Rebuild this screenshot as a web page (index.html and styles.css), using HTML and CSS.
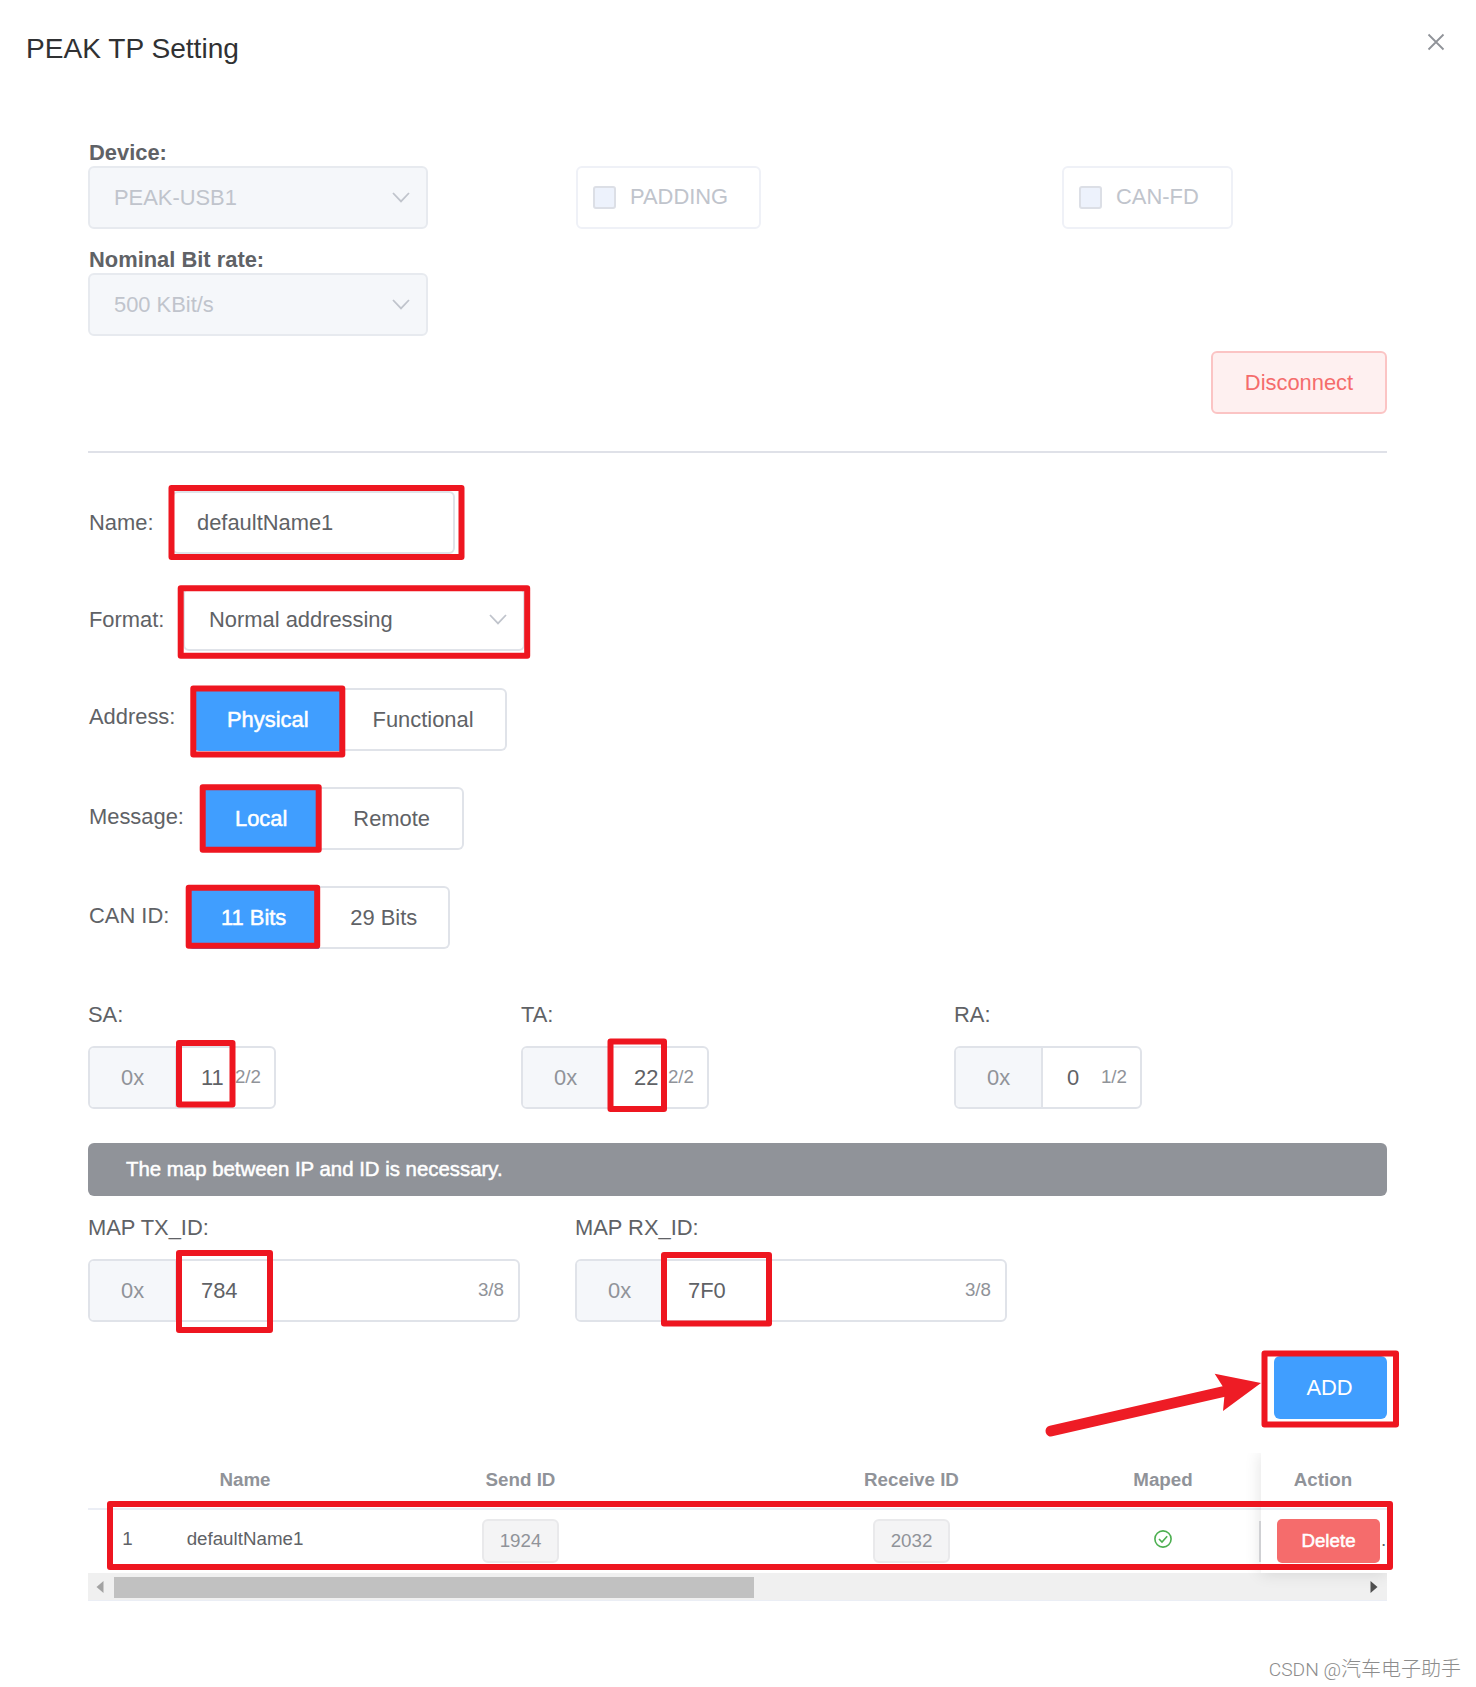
FILE: index.html
```
<!DOCTYPE html>
<html lang="en">
<head>
    <meta charset="UTF-8">
    <meta name="viewport" content="width=device-width, initial-scale=1.0">
    <title>PEAK TP Setting</title>
    <link rel="stylesheet" href="styles.css">
</head>
<body>
    <div class="dialog">
        <div class="dialog-header">
            <h5 class="dialog-title">PEAK TP Setting</h5>
            <button class="btn-close" aria-label="Close">
                <svg width="18" height="18" viewBox="0 0 18 18"><path d="M1.5 1.5L16.5 16.5M16.5 1.5L1.5 16.5" stroke="#909399" stroke-width="1.8" fill="none"/></svg>
            </button>
        </div>

        <div class="dialog-body">
            <!-- Device -->
            <div class="device-row">
                <div class="device-col">
                    <label class="label-bold">Device:</label>
                    <div class="select disabled">
                        <span>PEAK-USB1</span>
                        <svg class="chevron" width="18" height="11" viewBox="0 0 18 11"><path d="M1 1L9 9.4L17 1" stroke="#c0c4cc" stroke-width="1.8" fill="none"/></svg>
                    </div>
                    <label class="label-bold label-second">Nominal Bit rate:</label>
                    <div class="select disabled">
                        <span>500 KBit/s</span>
                        <svg class="chevron" width="18" height="11" viewBox="0 0 18 11"><path d="M1 1L9 9.4L17 1" stroke="#c0c4cc" stroke-width="1.8" fill="none"/></svg>
                    </div>
                </div>
                <div class="device-col">
                    <div class="checkbox-box check-padding"><span class="checkbox"></span><span class="checkbox-text">PADDING</span></div>
                </div>
                <div class="device-col">
                    <div class="checkbox-box check-canfd"><span class="checkbox"></span><span class="checkbox-text">CAN-FD</span></div>
                </div>
            </div>

            <div class="actions actions-connect">
                <button class="btn btn-disconnect">Disconnect</button>
            </div>

            <div class="divider"></div>

            <!-- Address settings -->
            <div class="form-row row-name">
                <label class="form-label">Name:</label>
                <input type="text" class="form-control" value="defaultName1">
            </div>
            <div class="form-row row-format">
                <label class="form-label">Format:</label>
                <div class="select">
                    <span>Normal addressing</span>
                    <svg class="chevron" width="18" height="11" viewBox="0 0 18 11"><path d="M1 1L9 9.4L17 1" stroke="#c0c4cc" stroke-width="1.8" fill="none"/></svg>
                </div>
            </div>
            <div class="form-row row-address">
                <label class="form-label">Address:</label>
                <div class="radio-group">
                    <button class="radio active">Physical</button>
                    <button class="radio">Functional</button>
                </div>
            </div>
            <div class="form-row row-message">
                <label class="form-label">Message:</label>
                <div class="radio-group">
                    <button class="radio active">Local</button>
                    <button class="radio">Remote</button>
                </div>
            </div>
            <div class="form-row row-canid">
                <label class="form-label">CAN ID:</label>
                <div class="radio-group">
                    <button class="radio active">11 Bits</button>
                    <button class="radio">29 Bits</button>
                </div>
            </div>

            <div class="address-grid">
                <div>
                    <label class="label-top">SA:</label>
                    <div class="input-group short">
                        <span class="prepend">0x</span>
                        <span class="value">11</span>
                        <span class="count">2/2</span>
                    </div>
                </div>
                <div>
                    <label class="label-top">TA:</label>
                    <div class="input-group short">
                        <span class="prepend">0x</span>
                        <span class="value">22</span>
                        <span class="count">2/2</span>
                    </div>
                </div>
                <div>
                    <label class="label-top">RA:</label>
                    <div class="input-group short">
                        <span class="prepend">0x</span>
                        <span class="value">0</span>
                        <span class="count">1/2</span>
                    </div>
                </div>
            </div>

            <div class="alert">The map between IP and ID is necessary.</div>

            <div class="map-row">
                <div class="map-col">
                    <label class="label-top">MAP TX_ID:</label>
                    <div class="input-group">
                        <span class="prepend">0x</span>
                        <span class="value">784</span>
                        <span class="count">3/8</span>
                    </div>
                </div>
                <div class="map-col">
                    <label class="label-top">MAP RX_ID:</label>
                    <div class="input-group">
                        <span class="prepend">0x</span>
                        <span class="value">7F0</span>
                        <span class="count">3/8</span>
                    </div>
                </div>
            </div>

            <div class="actions actions-add">
                <button class="btn btn-add">ADD</button>
            </div>

            <!-- Table -->
            <div class="table">
                <div class="table-main">
                    <div class="table-head">
                        <span></span>
                        <span>Name</span>
                        <span>Send ID</span>
                        <span>Receive ID</span>
                        <span>Maped</span>
                        <span></span>
                    </div>
                    <div class="table-row">
                        <span>1</span>
                        <span>defaultName1</span>
                        <span><span class="tag">1924</span></span>
                        <span><span class="tag">2032</span></span>
                        <span>
                            <svg width="18" height="18" viewBox="0 0 18 18"><circle cx="9" cy="9" r="8.1" stroke="#4caf50" stroke-width="1.6" fill="none"/><path d="M5 9L8 12L13.2 6.3" stroke="#4caf50" stroke-width="1.6" fill="none"/></svg>
                        </span>
                        <span class="cell-cut"></span>
                    </div>
                </div>
                <div class="table-fixed">
                    <div class="fixed-head">Action</div>
                    <div class="fixed-row"><button class="btn-delete">Delete</button><span class="dots">.</span></div>
                </div>
            </div>
            <div class="scrollbar">
                <svg width="8" height="12" viewBox="0 0 8 12"><path d="M7.5 0V12L0.5 6Z" fill="#a3a3a3"/></svg>
                <div class="scroll-thumb"></div>
                <svg class="scroll-right" width="8" height="12" viewBox="0 0 8 12"><path d="M0.5 0V12L7.5 6Z" fill="#505050"/></svg>
            </div>
        </div>

        <div class="watermark"><span class="watermark-site">CSDN @</span>汽车电子助手</div>

        <!-- Red marks over the form -->
        <svg class="marks" width="1476" height="1687" viewBox="0 0 1476 1687">
            <g fill="none" stroke="#ee1620" stroke-width="6" stroke-linejoin="round">
                <rect x="171.5" y="488" width="290" height="69"/>
                <rect x="180.7" y="588.3" width="346.5" height="67.5"/>
                <rect x="193.3" y="688.5" width="149" height="66"/>
                <rect x="202.7" y="787.3" width="116" height="62.5"/>
                <rect x="188.7" y="887.7" width="128.5" height="58"/>
                <rect x="179" y="1043" width="53.5" height="61.5"/>
                <rect x="610.5" y="1041.5" width="53.5" height="67.5"/>
                <rect x="179" y="1253" width="91" height="77"/>
                <rect x="664" y="1255" width="105" height="68.5"/>
                <rect x="1264.5" y="1353.5" width="131.5" height="71"/>
                <rect x="110" y="1504" width="1280" height="63"/>
            </g>
            <path d="M1051 1431L1226 1391" stroke="#ee1c25" stroke-width="11" stroke-linecap="round"/>
            <path d="M1261 1383L1214.7 1373.7L1225 1390L1223 1411Z" fill="#ee1c25"/>
        </svg>
    </div>
</body>
</html>
```
FILE: styles.css
```
* {
    box-sizing: border-box;
}

body {
    margin: 0;
    background-color: #fff;
    color: #606266;
    font-family: "Liberation Sans", Arial, "Noto Sans CJK SC", sans-serif;
    font-size: 21.9px;
}

button,
input {
    font-family: inherit;
    font-size: inherit;
}

.dialog {
    position: relative;
    width: 1476px;
    height: 1687px;
    overflow: hidden;
}

.dialog-header {
    display: flex;
    justify-content: space-between;
    align-items: flex-start;
    height: 142px;
    padding: 33px 31px 0 26px;
}

.dialog-title {
    margin: 0;
    color: #303133;
    font-size: 28.1px;
    font-weight: normal;
    line-height: 32px;
}

.btn-close {
    display: flex;
    padding: 0;
    border: none;
    background: none;
}

.dialog-body {
    padding: 0 89px 0 88px;
}

/* Device */
.device-row {
    display: flex;
    height: 194px;
}

.device-col {
    width: 487px;
}

.device-col:last-child {
    width: 325px;
}

.label-bold {
    display: block;
    margin-bottom: 2px;
    padding-left: 1px;
    font-weight: bold;
    line-height: 22px;
}

.label-second {
    margin-top: 20px;
}

.select {
    display: flex;
    justify-content: space-between;
    align-items: center;
    width: 340px;
    height: 63px;
    padding: 0 16px 0 24px;
    border: 2px solid #e0e3e9;
    border-radius: 6px;
}

.select.disabled {
    background-color: #f5f7fa;
    border-color: #e7eaef;
    color: #c0c4cc;
}

.chevron {
    margin-top: -1px;
}

.checkbox-box {
    display: flex;
    align-items: center;
    height: 63px;
    margin-top: 24px;
    padding-left: 15px;
    border: 2px solid #eff1f7;
    border-radius: 6px;
    color: #c0c4cc;
}

.check-padding {
    width: 185px;
    margin-left: 1px;
}

.check-canfd {
    width: 171px;
}

.checkbox {
    width: 23px;
    height: 23px;
    margin-right: 14px;
    background-color: #edf2fc;
    border: 2px solid #dcdfe6;
    border-radius: 3px;
}

.checkbox-text {
    padding-bottom: 2px;
}

.actions {
    display: flex;
    justify-content: flex-end;
}

.actions-connect {
    margin-top: 15px;
}

.btn {
    height: 63px;
    padding: 0;
    border-radius: 6px;
}

.btn-disconnect {
    width: 176px;
    background-color: #fef0f0;
    border: 2px solid #fbc4c4;
    color: #f56c6c;
}

.divider {
    height: 2px;
    margin-top: 37px;
    background-color: #dfe1e8;
}

/* Address settings */
.form-row {
    display: flex;
    align-items: center;
    height: 63px;
}

.form-label {
    padding-left: 1px;
}

.row-name {
    margin-top: 38px;
}

.row-name .form-label {
    width: 84px;
}

.form-control {
    width: 283px;
    height: 63px;
    padding: 0 23px;
    border: 2px solid #e0e3e9;
    border-radius: 6px;
    color: #606266;
}

.row-format {
    margin-top: 34px;
}

.row-format .form-label {
    width: 95px;
}

.row-format .select {
    width: 342px;
}

.row-address {
    margin-top: 37px;
}

.row-address .form-label {
    width: 105px;
    padding-bottom: 6px;
}

.row-message {
    margin-top: 36px;
}

.row-message .form-label {
    width: 113px;
    padding-bottom: 3px;
}

.row-canid {
    margin-top: 36px;
}

.row-canid .form-label {
    width: 99px;
    padding-bottom: 3px;
}

.radio-group {
    display: flex;
}

.radio {
    height: 63px;
    padding: 0 31px;
    background-color: #fff;
    border: 2px solid #e0e3e9;
    border-left: none;
    border-radius: 0 6px 6px 0;
    color: #606266;
}

.radio.active {
    padding: 0 31px 0 32px;
    background-color: #409eff;
    border: 2px solid #409eff;
    border-radius: 6px 0 0 6px;
    color: #fff;
    -webkit-text-stroke: 0.5px #fff;
}

.row-message .radio {
    padding: 0 32px;
}

.address-grid {
    display: grid;
    grid-template-columns: repeat(3, 1fr);
    margin-top: 55px;
}

.label-top {
    display: block;
    margin-bottom: 20px;
    line-height: 22px;
}

.input-group {
    display: flex;
    align-items: center;
    width: 432px;
    height: 63px;
    border: 2px solid #e0e3e9;
    border-radius: 6px;
    overflow: hidden;
}

.input-group.short {
    width: 188px;
}

.prepend {
    width: 87px;
    height: 59px;
    padding-left: 31px;
    background-color: #f5f7fa;
    border-right: 2px solid #e0e3e9;
    color: #909399;
    line-height: 59px;
}

.value {
    flex: 1;
    padding-left: 24px;
}

.count {
    padding: 0 14px 1px 0;
    color: #909399;
    font-size: 18.75px;
}

.short .count {
    padding-right: 13px;
}

.short .value {
    width: 60px;
}

.alert {
    display: flex;
    align-items: center;
    height: 53px;
    margin-top: 34px;
    padding: 0 38px 1px;
    background-color: #909399;
    border-radius: 6px;
    color: #fff;
    font-size: 20.4px;
    -webkit-text-stroke: 0.5px #fff;
}

.map-row {
    display: flex;
    margin-top: 21px;
}

.map-col {
    width: 487px;
}

.actions-add {
    margin-top: 34px;
}

.btn-add {
    width: 113px;
    padding-right: 2px;
    background-color: #409eff;
    border: none;
    color: #fff;
}

/* Table */
.table {
    display: flex;
    height: 120px;
    margin-top: 34px;
    font-size: 18.75px;
}

.table-main {
    overflow: hidden;
}

.table-head,
.table-row {
    display: grid;
    grid-template-columns: 79px 156px 395px 387px 116px 40px;
    align-items: center;
    text-align: center;
}

.table-head {
    height: 57px;
    padding-bottom: 2px;
    border-bottom: 2px solid #ebeef5;
    color: #909399;
    font-weight: bold;
}

.table-row {
    height: 58px;
}

.tag {
    display: inline-block;
    width: 77px;
    height: 44px;
    margin-top: 4px;
    background-color: #f4f4f5;
    border: 2px solid #e9e9eb;
    border-radius: 6px;
    color: #909399;
    line-height: 40px;
}

.table-row svg {
    display: block;
    margin: 0 auto;
}

.cell-cut {
    justify-self: end;
    width: 2px;
    height: 41px;
    margin-top: 4px;
    background-color: #dcdde0;
}

/* Fixed column casts its shadow on the table and on the scrollbar */
.table-fixed {
    position: relative;
    z-index: 1;
    width: 126px;
    background-color: #fff;
    box-shadow: 0 0 16px rgba(0, 0, 0, 0.12);
    clip-path: inset(0 0 -16px -16px);
}

.fixed-head {
    height: 57px;
    padding: 0 2px 2px 0;
    border-bottom: 2px solid #ebeef5;
    color: #909399;
    font-weight: bold;
    line-height: 54px;
    text-align: center;
}

.fixed-row {
    display: flex;
    align-items: flex-end;
    padding: 9px 0 0 16px;
}

.btn-delete {
    width: 103px;
    height: 44px;
    padding: 0;
    background-color: #f56c6c;
    border: none;
    border-radius: 5px;
    color: #fff;
    -webkit-text-stroke: 0.5px #fff;
}

.dots {
    width: 5px;
    padding: 0 0 12px 1px;
}

.scrollbar {
    display: flex;
    align-items: center;
    height: 28px;
    padding: 1px 9px 0 8px;
    background-color: #f0f0f0;
    border-bottom: 1px solid #ebeef5;
}

.scroll-thumb {
    width: 640px;
    height: 21px;
    margin-left: 10px;
    background-color: #c1c1c1;
}

.scroll-right {
    margin-left: auto;
}

.watermark {
    margin: 54px 15px 0 0;
    color: #8c8c8c;
    font-family: "Noto Sans CJK SC", sans-serif;
    font-size: 20px;
    font-weight: 300;
    line-height: 26px;
    text-align: right;
}

.watermark-site {
    font-family: Roboto, "Liberation Sans", sans-serif;
    font-size: 19.2px;
}

/* Marks lie over the form */
.marks {
    position: absolute;
    top: 0;
    left: 0;
    z-index: 2;
    pointer-events: none;
}
```
